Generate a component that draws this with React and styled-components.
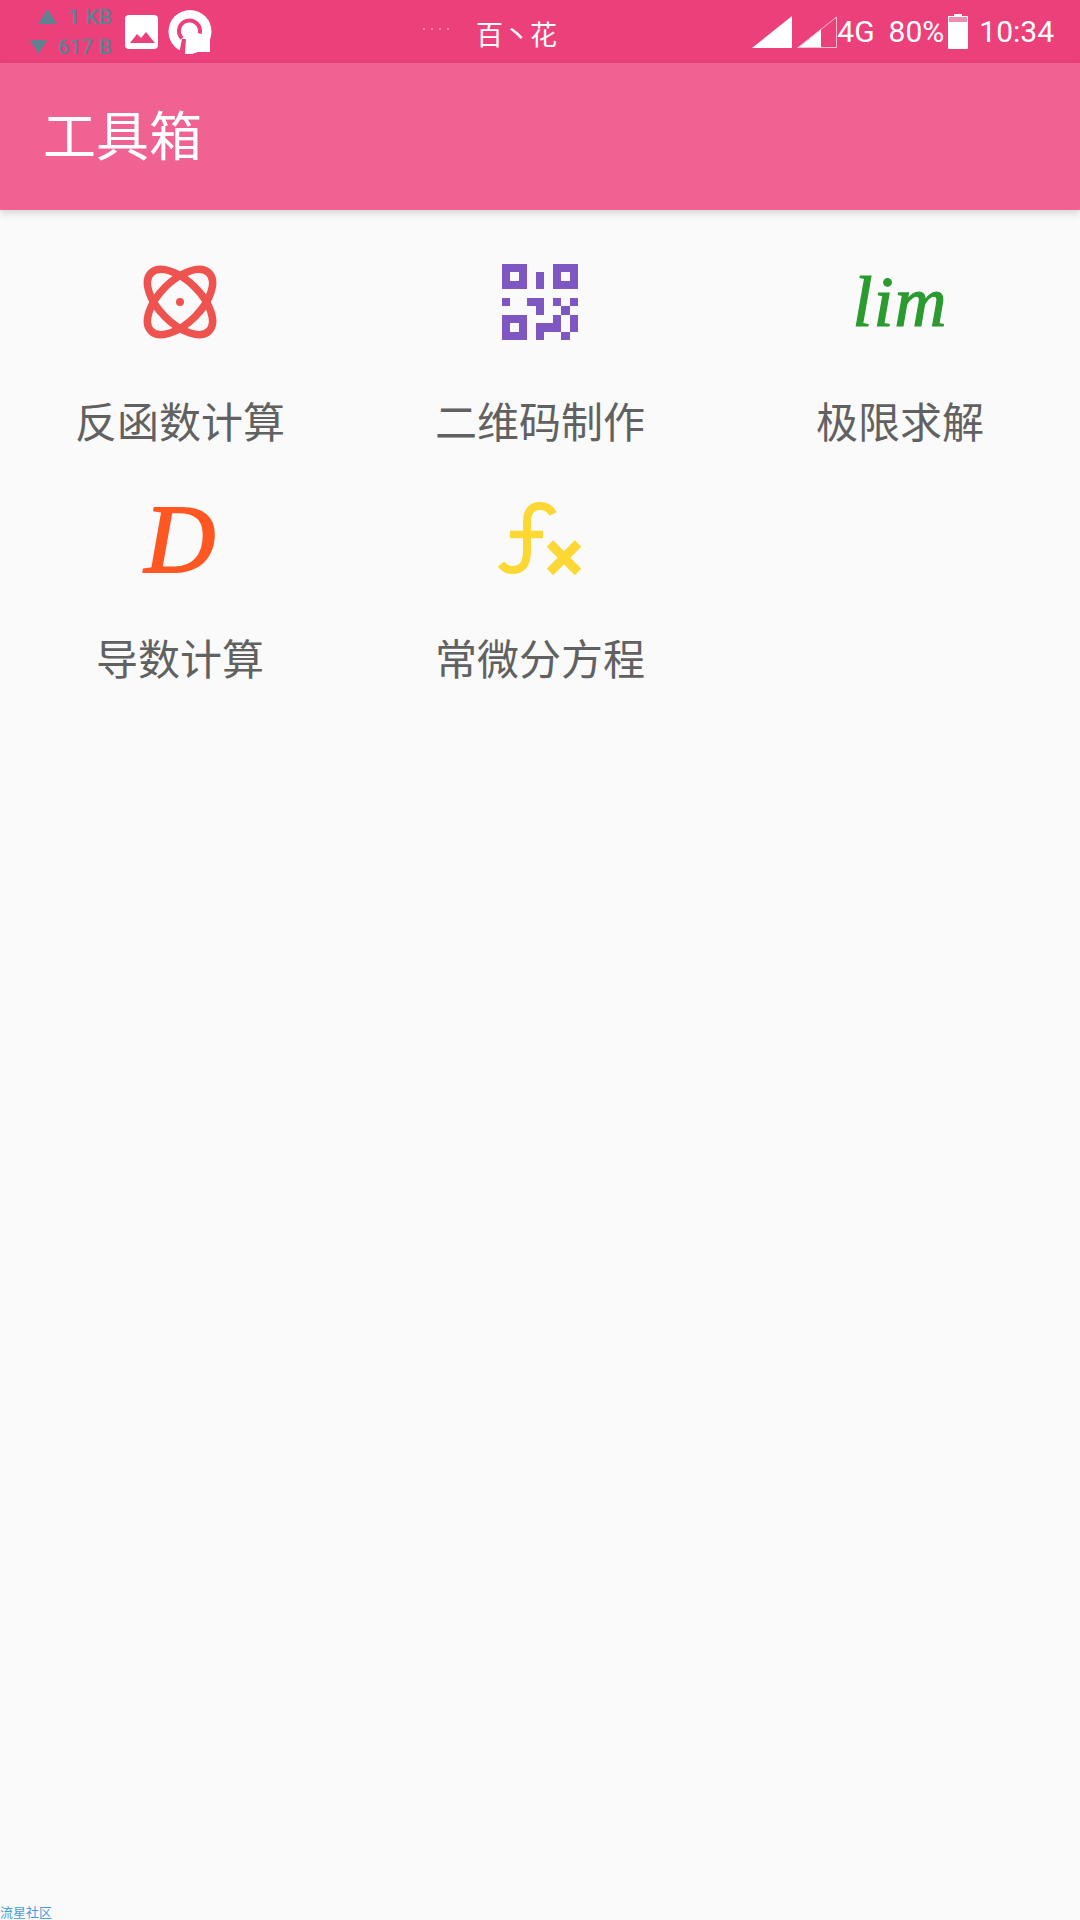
import React from "react";
import styled, { createGlobalStyle } from "styled-components";

const GlobalStyle = createGlobalStyle`
  html, body {
    margin: 0;
    padding: 0;
    background: #fafafa;
  }
`;

const Page = styled.div`
  position: relative;
  width: 1080px;
  height: 1920px;
  overflow: hidden;
  display: flex;
  flex-direction: column;
  background: #fafafa;
  font-family: "Noto Sans CJK SC", Roboto, sans-serif;
`;

const StatusBar = styled.div`
  height: 63px;
  flex-shrink: 0;
  background: #ec407a;
  display: flex;
  align-items: center;
  color: #fff;
`;

const Speeds = styled.div`
  width: 112px;
  height: 63px;
  display: flex;
  flex-direction: column;
  align-items: flex-end;
  justify-content: center;
  gap: 10px;
  color: #5f8191;
  font-family: Roboto, sans-serif;
  font-size: 21px;
  font-weight: 500;
  line-height: 20px;
`;

const SpeedRow = styled.div`
  display: flex;
  align-items: center;
  gap: 11px;
`;

const NotifyIcons = styled.div`
  display: flex;
  align-items: center;
  gap: 10px;
  margin-left: 13px;
`;

const Carrier = styled.div`
  margin-left: 211px;
  display: flex;
  align-items: center;
  gap: 27px;
  font-size: 27px;
  line-height: 63px;
  padding-top: 3px;
`;

const CarrierDots = styled.span`
  width: 26px;
  height: 2px;
  margin-bottom: 8px;
  background: repeating-linear-gradient(90deg, #f285a8 0 2px, transparent 2px 8px);
`;

const SystemIcons = styled.div`
  margin-left: auto;
  margin-right: 26px;
  display: flex;
  align-items: center;
  font-family: Roboto, sans-serif;
  font-size: 30px;
  line-height: 63px;
`;

const Signals = styled.div`
  display: flex;
  gap: 5px;
`;

const NetworkType = styled.span`
  margin-right: 14px;
`;

const Battery = styled.div`
  margin: 0 11px 0 4px;
  display: flex;
`;

const AppBar = styled.header`
  position: relative;
  z-index: 1;
  height: 147px;
  box-sizing: border-box;
  flex-shrink: 0;
  background: #f06292;
  box-shadow: 0 3px 8px rgba(0, 0, 0, 0.16);
  display: flex;
  align-items: center;
  padding: 0 0 7px 43px;
  color: #fff;
  font-size: 53px;
`;

const ToolGrid = styled.main`
  display: grid;
  grid-template-columns: repeat(3, 360px);
  grid-auto-rows: 237px;
  padding-top: 44px;
`;

const Tool = styled.div`
  display: flex;
  flex-direction: column;
  align-items: center;
`;

const IconBox = styled.div`
  width: 96px;
  height: 96px;
  display: flex;
  align-items: center;
  justify-content: center;
`;

const MathGlyph = styled.span`
  font-family: "Liberation Serif", serif;
  font-style: italic;
  font-size: ${(props) => props.size}px;
  letter-spacing: ${(props) => props.spacing}px;
  line-height: 96px;
  color: ${(props) => props.color};
  -webkit-text-stroke: ${(props) => props.weight}px ${(props) => props.color};
`;

const ToolName = styled.div`
  margin-top: 45px;
  font-size: 42px;
  line-height: 50px;
  color: #616161;
`;

const Watermark = styled.div`
  position: absolute;
  left: 0;
  bottom: 1px;
  font-size: 13px;
  line-height: 14px;
  color: #4a9be0;
`;

const UpArrow = () => (
  <svg width="19" height="15" viewBox="0 0 19 15">
    <path d="M9.5 0L19 15H0z" fill="#5f8191" />
  </svg>
);

const DownArrow = () => (
  <svg width="17" height="14" viewBox="0 0 17 14">
    <path d="M0 0h17L8.5 14z" fill="#5f8191" />
  </svg>
);

const PhotoIcon = () => (
  <svg width="33" height="34" viewBox="0 0 33 34">
    <rect width="33" height="34" rx="4" fill="#fff" />
    <path d="M5 28l7-9 4 4 5-6 9 11z" fill="#ec407a" />
  </svg>
);

const RingIcon = () => (
  <svg width="44" height="44" viewBox="0 0 44 44">
    <circle cx="22" cy="21.5" r="21.5" fill="#fff" />
    <path d="M11 44L14 29L19 29L17 44z" fill="#ec407a" />
    <path d="M14 28.4A10.5 10.5 0 1 1 31.7 23.5" fill="none" stroke="#ec407a" strokeWidth="4" />
    <path d="M17 44L18 28H28L42 30V42L30 42L24 44z" fill="#fff" />
  </svg>
);

const SignalFull = () => (
  <svg width="40" height="32" viewBox="0 0 40 32">
    <path d="M40 0V32H0z" fill="#fff" />
  </svg>
);

const SignalPartial = () => (
  <svg width="40" height="32" viewBox="0 0 40 32">
    <path d="M24 13V32H0z" fill="#fff" />
    <path d="M39.5 1V31.5H1.5z" fill="none" stroke="#f9bdd3" strokeWidth="1" />
  </svg>
);

const BatteryIcon = () => (
  <svg width="20" height="35" viewBox="0 0 20 35">
    <path d="M6 0h8v2h5a1 1 0 0 1 1 1v31a1 1 0 0 1-1 1H1a1 1 0 0 1-1-1V3a1 1 0 0 1 1-1h5z" fill="#fff" />
    <rect x="1" y="3" width="18" height="5" fill="#f28db0" />
  </svg>
);

const AtomIcon = () => (
  <svg width="96" height="96" viewBox="0 0 96 96">
    <g fill="none" stroke="#ef5350" strokeWidth="7.5">
      <ellipse cx="48" cy="48" rx="41" ry="21" transform="rotate(45 48 48)" />
      <ellipse cx="48" cy="48" rx="41" ry="21" transform="rotate(-45 48 48)" />
    </g>
    <circle cx="48" cy="48" r="4" fill="#ef5350" />
  </svg>
);

// finder squares are drawn on their own, the rest are single modules
const qrModules = [
  [4, 1], [4, 2],
  [0, 4], [3, 4], [4, 4], [6, 4], [8, 4],
  [4, 5], [7, 5],
  [6, 6], [8, 6],
  [4, 7], [5, 7], [6, 7], [8, 7],
  [4, 8], [7, 8],
];

const Finder = ({ x, y }) => (
  <path fillRule="evenodd" d={`M${x} ${y}h3v3h-3zM${x + 1} ${y + 1}v1h1v-1z`} />
);

const QrIcon = () => (
  <svg width="76" height="76" viewBox="0 0 9 9" fill="#7e57c2" shapeRendering="crispEdges">
    <Finder x={0} y={0} />
    <Finder x={6} y={0} />
    <Finder x={0} y={6} />
    {qrModules.map(([x, y]) => (
      <rect key={`${x}-${y}`} x={x} y={y} width="1" height="1" />
    ))}
  </svg>
);

const FxIcon = () => (
  <svg width="96" height="96" viewBox="0 0 96 96" fill="none" stroke="#fdd835">
    <path strokeWidth="8" d="M61 23C58 17 53 15 48 15C39 15 35 21 35 31V60C35 73 30 79 20 79C16 79 12 77 9 73" />
    <path strokeWidth="7.5" d="M18 43.5H51" />
    <path strokeWidth="9" d="M58 52.5L86 81M86 52.5L58 81" />
  </svg>
);

const tools = [
  { name: "反函数计算", icon: <AtomIcon /> },
  { name: "二维码制作", icon: <QrIcon /> },
  { name: "极限求解", icon: <MathGlyph size={72} spacing={1} weight={1.2} color="#2b9a2f">lim</MathGlyph> },
  { name: "导数计算", icon: <MathGlyph size={98} spacing={0} weight={2} color="#ff5722">D</MathGlyph> },
  { name: "常微分方程", icon: <FxIcon /> },
];

const App = () => (
  <Page>
    <GlobalStyle />
    <StatusBar>
      <Speeds>
        <SpeedRow>
          <UpArrow />
          <span>1 KB</span>
        </SpeedRow>
        <SpeedRow>
          <DownArrow />
          <span>617 B</span>
        </SpeedRow>
      </Speeds>
      <NotifyIcons>
        <PhotoIcon />
        <RingIcon />
      </NotifyIcons>
      <Carrier>
        <CarrierDots />
        <span>百丶花</span>
      </Carrier>
      <SystemIcons>
        <Signals>
          <SignalFull />
          <SignalPartial />
        </Signals>
        <NetworkType>4G</NetworkType>
        <span>80%</span>
        <Battery>
          <BatteryIcon />
        </Battery>
        <span>10:34</span>
      </SystemIcons>
    </StatusBar>
    <AppBar>工具箱</AppBar>
    <ToolGrid>
      {tools.map((tool) => (
        <Tool key={tool.name}>
          <IconBox>{tool.icon}</IconBox>
          <ToolName>{tool.name}</ToolName>
        </Tool>
      ))}
    </ToolGrid>
    <Watermark>流星社区</Watermark>
  </Page>
);

export default App;
